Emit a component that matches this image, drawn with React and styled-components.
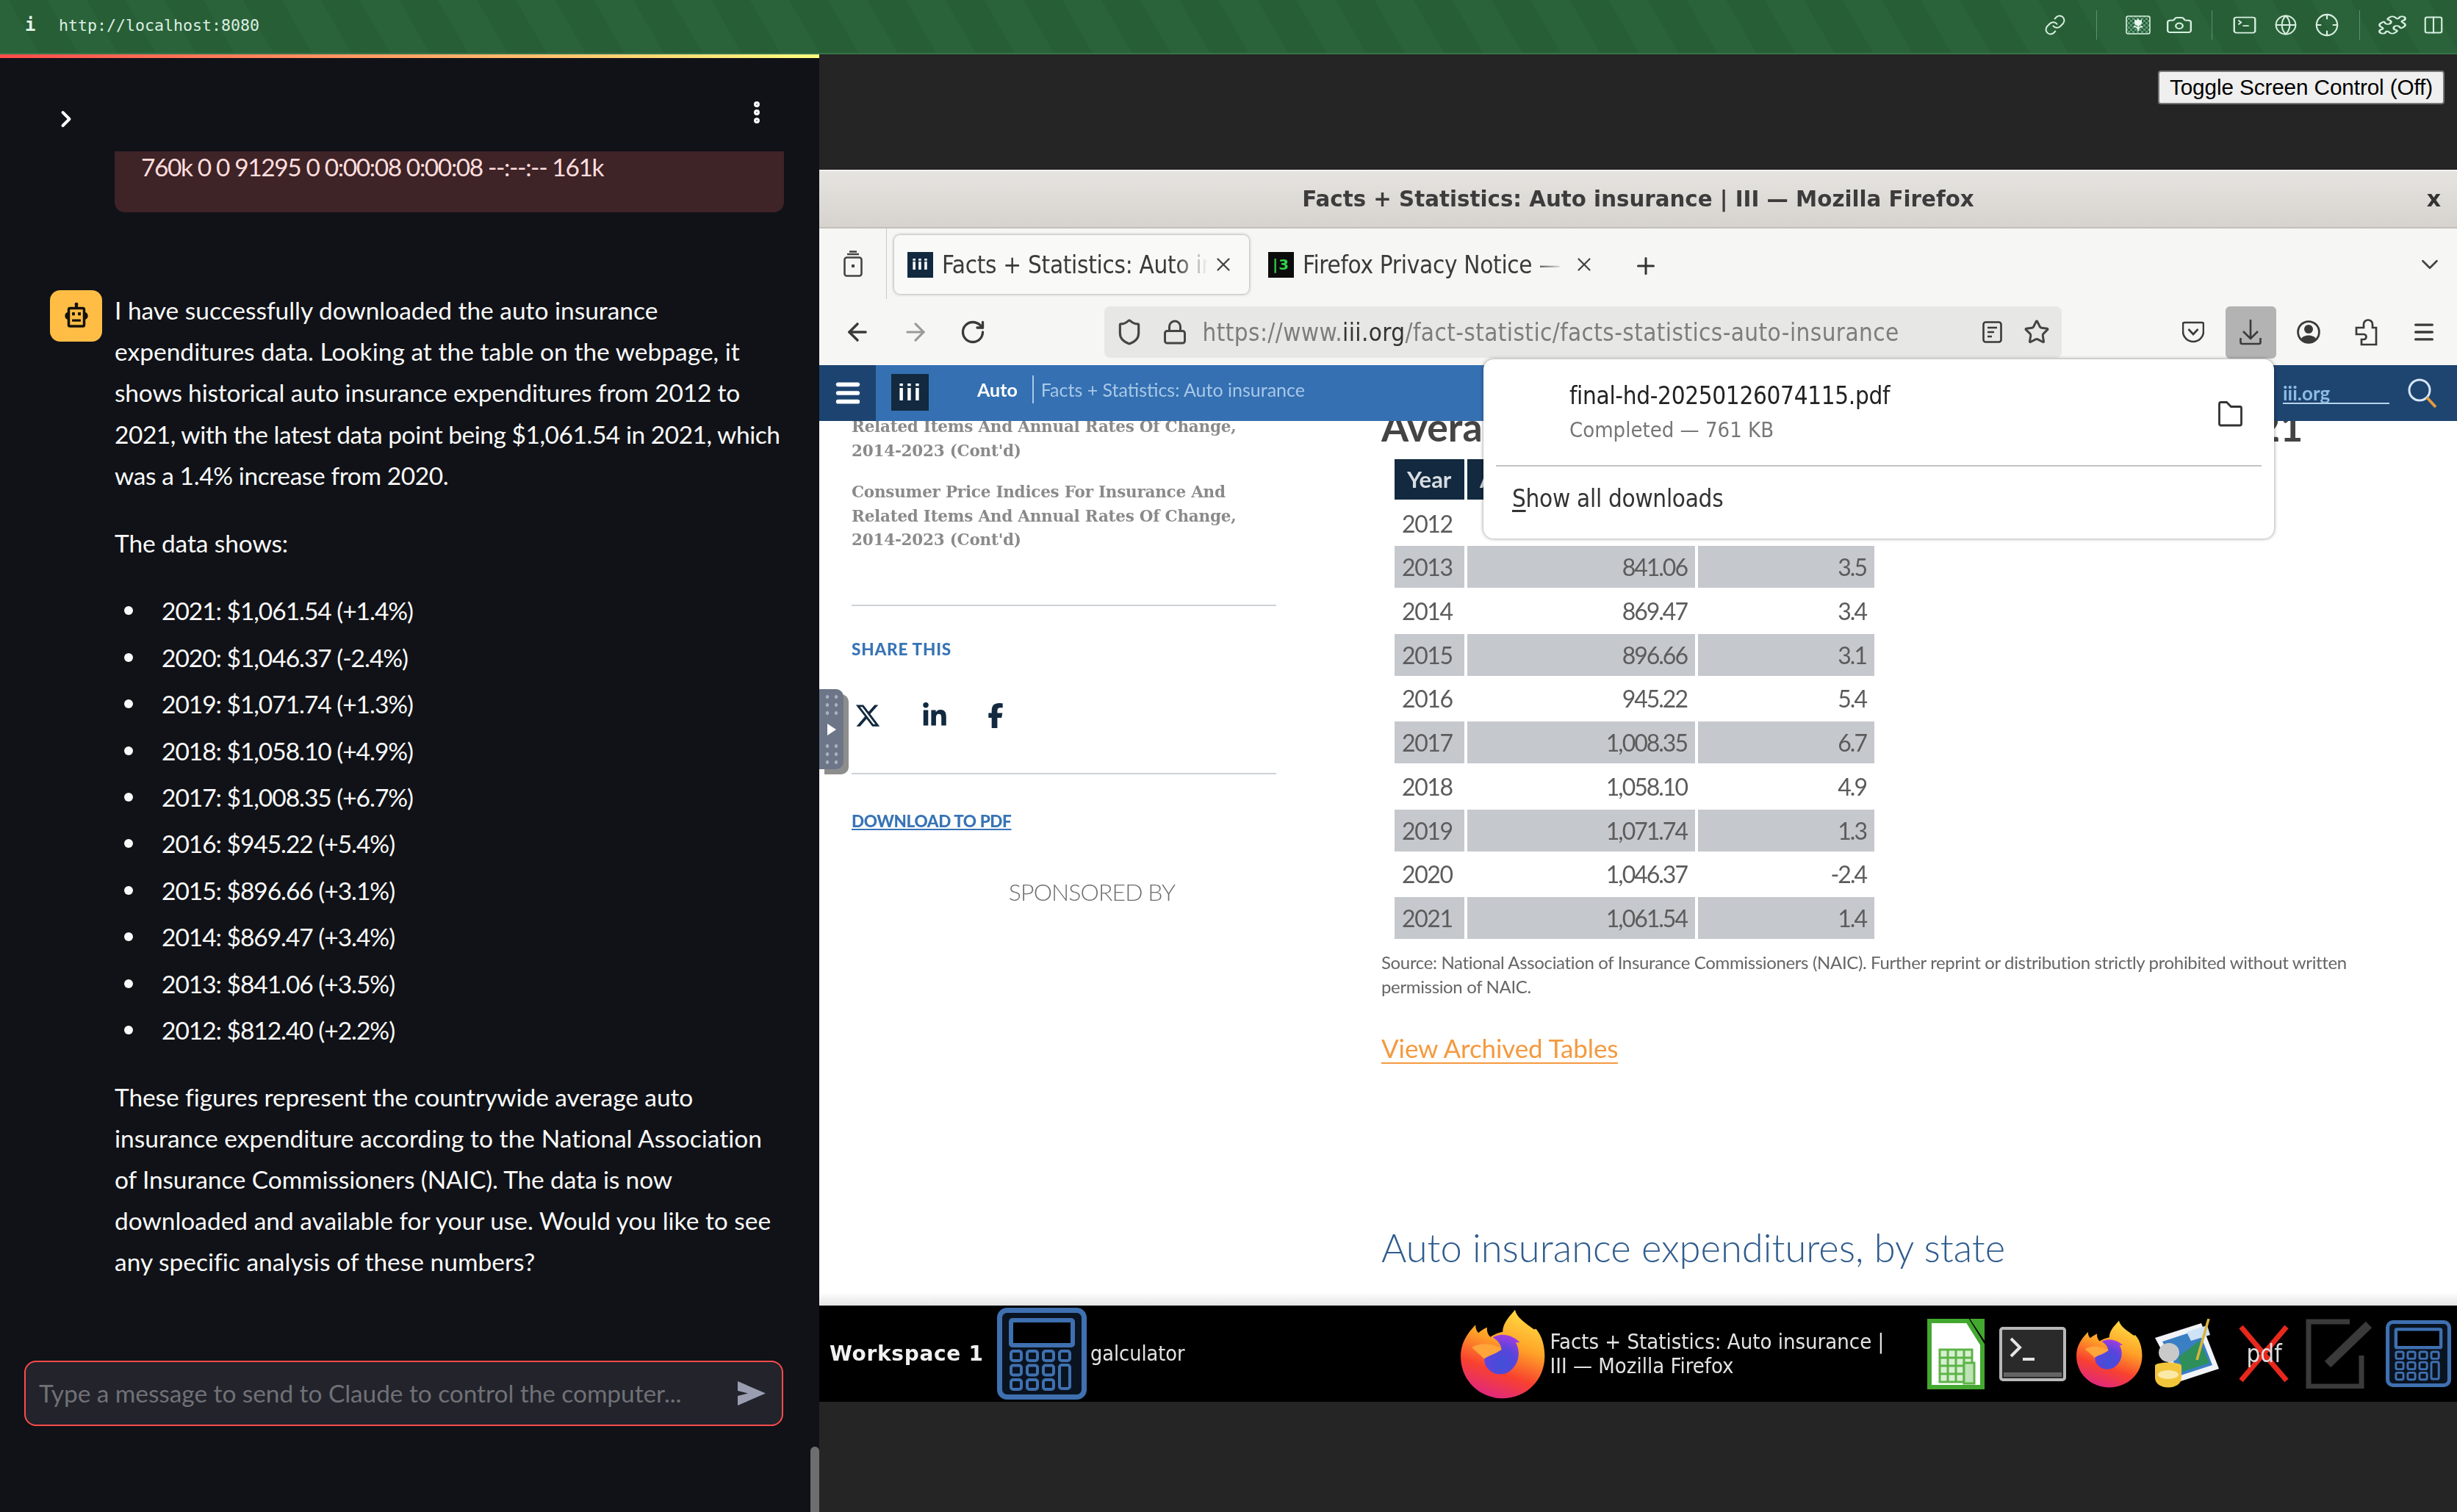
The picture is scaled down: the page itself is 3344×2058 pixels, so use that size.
import React from "react";
import styled, { createGlobalStyle } from "styled-components";
import { Link, Camera, SquareTerminal, Globe, Crosshair, Puzzle, Columns2, ChevronRight, EllipsisVertical, ArrowLeft, ArrowRight, RotateCw, Shield, Lock, Star, Menu, ChevronDown, Plus, X } from "lucide-react";
import { FaXTwitter, FaLinkedinIn, FaFacebookF } from "react-icons/fa6";

const Global = createGlobalStyle`
  html, body { margin: 0; padding: 0; background: #252525; }
  * { box-sizing: border-box; }
  #root { width: 3344px; height: 2058px; overflow: hidden; }
`;

const Root = styled.div`
  width: 3344px; height: 2058px; display: flex; flex-direction: column; background: #252525;
`;
const TopBar = styled.header`
  height: 74px; flex: none; display: flex; align-items: center; padding: 0 4px 4px 0;
  background: repeating-linear-gradient(60deg, #2a6339 0 46px, #275e36 46px 92px);
  border-bottom: 2px solid #37734a;
  color: #dcefe3;
`;
const InfoI = styled.span`
  font: 700 24px "DejaVu Sans Mono", monospace; margin-left: 34px; width: 46px; color: #e4f3ea;
`;
const Address = styled.span`
  font: 400 21.6px "DejaVu Sans Mono", monospace; flex: 1; color: #dcefe3;
`;
const BarSlot = styled.span`
  width: 56px; display: flex; justify-content: center; align-items: center; color: #d8efe1;
`;
const BarSep = styled.span`
  width: 1px; height: 40px; background: #5b9170; margin: 0 ${p => p.$gap}px;
`;
const Body = styled.div`
  flex: 1; display: flex; min-height: 0;
`;
const Left = styled.section`
  width: 1115px; flex: none; position: relative; display: flex; flex-direction: column;
  background: #101217; color: #fafafa;
  font-family: "Lato", "Noto Sans", sans-serif; font-size: 33.5px; line-height: 56.2px;
`;
const Decoration = styled.div`
  height: 5px; flex: none; background: linear-gradient(90deg, #ff4b4b, #fffd80);
`;
const Header = styled.div`
  height: 127px; flex: none; display: flex; justify-content: space-between; padding: 55px 66px 0 72px; color: #fff;
`;
const ChevronBox = styled.span`
  display: block; margin-top: 5px; height: 36px;
`;
const ErrorBox = styled.div`
  margin-left: 156px; width: 911px; height: 83px; flex: none; padding: 0 36px;
  background: #3e2327; color: #ffdede; border-radius: 0 0 14px 14px; line-height: 42px; letter-spacing: -1.41px;
`;
const Message = styled.div`
  margin: 106px 0 0 68px; display: flex; gap: 17px; align-items: flex-start;
`;
const Avatar = styled.div`
  width: 71px; height: 70px; flex: none; background: #ffbd45; border-radius: 14px; display: flex; align-items: center; justify-content: center;
`;
const Content = styled.div`
  white-space: nowrap; margin-top: -1px;
`;
const Para = styled.p`
  margin: 0 0 36px;
`;
const Line = styled.span`
  display: block; letter-spacing: ${p => p.$ls}px;
`;
const Bullets = styled.ul`
  margin: 0 0 34px; padding: 0 0 0 64px; list-style: none; letter-spacing: -1.03px;
`;
const BulletItem = styled.li`
  position: relative; margin-bottom: 7.25px;
  &:last-child { margin-bottom: 0; }
  &::before { content: ""; position: absolute; left: -51px; top: 22px; width: 12px; height: 12px; border-radius: 50%; background: #fafafa; }
`;
const InputWrap = styled.div`
  margin-top: auto; padding: 0 49px 117px 33px;
`;
const InputBox = styled.div`
  height: 89px; border: 2px solid #ff4b4b; border-radius: 16px; background: #22232b; display: flex; align-items: center; justify-content: space-between; padding: 0 22px 0 18px;
  color: #707176; letter-spacing: -0.08px;
`;
const Scrollbar = styled.div`
  position: absolute; right: 0; bottom: 0; width: 12px; height: 89px; background: #6c6e70; border-radius: 6px 6px 0 0;
`;

const Right = styled.section`
  flex: 1; display: flex; flex-direction: column; min-width: 0;
`;
const ControlRow = styled.div`
  height: 157px; flex: none; display: flex; justify-content: flex-end; padding: 22px 17px 0 0; align-items: flex-start;
`;
const ToggleButton = styled.button`
  width: 390px; height: 46px; padding: 0 0 1px; background: #efefef; border: 2px solid #767676; border-radius: 4px; color: #000;
  font: 400 29.7px "Liberation Sans", Arial, sans-serif; letter-spacing: -0.1px; line-height: 38px;
`;
const Win = styled.div`
  height: 1546px; flex: none; position: relative; display: flex; flex-direction: column; background: #f6f6f4; overflow: hidden; filter: blur(0.5px);
`;
const TitleBar = styled.div`
  height: 80px; flex: none; display: flex; align-items: center; justify-content: center; position: relative;
  background: linear-gradient(#e6e4e0, #d6d3ce); border-top: 2px solid #f2f1ef; border-bottom: 2px solid #c3c0b9;
  font: 700 29.3px "DejaVu Sans", sans-serif; color: #3c3c3c;
`;
const WinClose = styled.span`
  position: absolute; right: 22px; top: 20px; font: 700 30px "DejaVu Sans", sans-serif; color: #333;
`;
const TabRow = styled.div`
  height: 101px; flex: none; display: flex; align-items: flex-start; position: relative; color: #3a3a3a;
`;
const ViewSlot = styled.div`
  width: 92px; height: 96px; flex: none; display: flex; align-items: center; justify-content: center; border-right: 1px solid #c9c9c7; margin-right: 10px;
`;
const TabBox = styled.div`
  width: ${p => p.$w}px; height: 80px; margin-top: 9px; flex: none; display: flex; align-items: center; padding-left: ${p => p.$active ? 18 : 26}px;
  border-radius: 8px; background: ${p => p.$active ? "#f9f9f8" : "transparent"};
  box-shadow: ${p => p.$active ? "0 0 4px rgba(0,0,0,.4)" : "none"};
`;
const TabText = styled.span`
  font: 400 33px "DejaVu Sans", sans-serif; font-stretch: condensed; white-space: nowrap; overflow: hidden; flex: none; width: ${p => p.$w}px; margin-left: 12px; letter-spacing: -0.3px;
  -webkit-mask-image: linear-gradient(90deg, #000 88%, transparent 100%); mask-image: linear-gradient(90deg, #000 88%, transparent 100%);
`;
const TabClose = styled.span`
  display: flex; width: 40px; justify-content: center; margin-left: ${p => p.$ml}px; color: #444;
`;
const Favicon = styled.span`
  width: 35px; height: 35px; flex: none; background: ${p => p.$bg}; display: flex; align-items: center; justify-content: center;
  font: 700 20px "DejaVu Sans", sans-serif; color: ${p => p.$fg}; letter-spacing: 1px;
`;
const PlusSlot = styled.span`
  width: 60px; margin: 33px 0 0 20px; display: flex; justify-content: center; color: #333;
`;
const TabChevron = styled.span`
  position: absolute; right: 18px; top: 30px; color: #444;
`;
const NavRow = styled.div`
  height: 85px; flex: none; display: flex; align-items: flex-start; padding: 5px 0 0 13px; color: #3a3a3a;
`;
const NavSlot = styled.span`
  width: 78.5px; height: 70px; flex: none; display: flex; align-items: center; justify-content: center; color: ${p => p.$c || "#3a3a3a"};
`;
const UrlBar = styled.div`
  width: 1303px; height: 70px; margin: 0 140px 0 139px; flex: none; display: flex; align-items: center; background: #e7e7e6; border-radius: 8px; padding: 0 14px;
`;
const UrlIcon = styled.span`
  width: 40px; display: flex; justify-content: center; margin-left: ${p => p.$ml || 0}px; color: #454545;
`;
const UrlText = styled.span`
  flex: 1; margin-left: 18px; font: 400 33px "DejaVu Sans", sans-serif; font-stretch: condensed; color: #7d7d7d; white-space: nowrap; letter-spacing: 0.4px;
  b { font-weight: 400; color: #333; }
`;
const DownloadBtn = styled.span`
  width: 69px; height: 71px; background: #b3b3b3; border-radius: 6px; display: flex; align-items: center; justify-content: center; color: #3a3a3a;
`;
const Page = styled.div`
  flex: 1; min-height: 0; display: flex; flex-direction: column; background: #fff; position: relative; overflow: hidden;
  &::after { content: ""; position: absolute; left: 0; right: 0; bottom: 0; height: 18px; background: linear-gradient(rgba(255,255,255,0), #e4e4e4); }
`;
const SiteBar = styled.div`
  height: 76px; flex: none; display: flex; align-items: center; background: linear-gradient(90deg, #3470b2 0 86%, #1e4470 86%); position: relative; z-index: 1;
`;
const Burger = styled.span`
  width: 77px; height: 100%; background: #1d4471; display: flex; align-items: center; justify-content: center; color: #fff;
`;
const SiteLogo = styled.span`
  width: 51px; height: 50px; margin: -2px 0 0 21px; background: #12293f; color: #fff; display: flex; align-items: center; justify-content: center;
  font: 700 32px "Liberation Sans", sans-serif; letter-spacing: 2px;
`;
const Crumb = styled.span`
  margin: -10px 0 0 66px; font: 700 25px "Lato", sans-serif; color: #fff; padding-right: 20px; border-right: 2px solid #a8c8e8; line-height: 38px;
`;
const CrumbTail = styled.span`
  margin: -10px 0 0 10px; font: 400 25px "Lato", sans-serif; color: #a9c8e8; letter-spacing: 0;
`;
const SiteSearch = styled.span`
  margin-left: auto; display: flex; align-items: center; width: 249px; padding-left: 12px;
`;
const SiteDomain = styled.span`
  width: 145px; border-bottom: 2px solid #b8d4ee; font: 700 26px "Lato", sans-serif; color: #8dbbe2; line-height: 26px; margin: 2px 0 0;
`;
const MagSlot = styled.span`
  margin-left: 24px; display: flex;
`;
const Columns = styled.div`
  flex: 1; display: flex; min-height: 0;
`;
const Sidebar = styled.aside`
  width: 765px; flex: none; padding-left: 44px; margin-top: -8px;
`;
const SideLink = styled.p`
  margin: 0 0 24px; width: 600px; font: 700 21.5px/32.5px "DejaVu Serif", serif; color: #8a8a8a; letter-spacing: -0.24px; white-space: nowrap;
`;
const Rule = styled.div`
  width: 578px; height: 2px; background: #cdd2d9; margin-top: ${p => p.$mt}px;
`;
const SideLabel = styled.div`
  margin-top: ${p => p.$mt}px; font: 900 22.5px/30px "Lato", sans-serif; letter-spacing: ${p => p.$ls}px; color: #3874b6;
  span { text-decoration: ${p => p.$u ? "underline" : "none"}; }
`;
const Social = styled.div`
  margin-top: 55px; display: flex; align-items: center; height: 40px; color: #12293f; padding-left: 4px;
  svg:nth-child(2) { margin-left: 55px; }
  svg:nth-child(3) { margin-left: 48px; }
`;
const Sponsored = styled.div`
  margin-top: 61px; width: 654px; text-align: center; font: 300 32px/40px "Lato", sans-serif; color: #6d6d6d; letter-spacing: -0.9px;
`;
const Handle = styled.div`
  position: absolute; left: 0; top: 441px; height: 109px; width: 33px; background: #6c7688; border-radius: 0 10px 10px 0; box-shadow: 7px 7px 0 #8d8d8d; z-index: 3;
  display: flex; flex-direction: column; align-items: center; justify-content: center; gap: 8px;
`;
const Dots = styled.span`
  width: 24px; height: 33px; display: block;
  background-image: radial-gradient(circle, #a9b0bc 2.2px, transparent 2.6px); background-size: 12px 11px;
`;
const Main = styled.main`
  flex: 1; min-width: 0; overflow: hidden; color: #555;
`;
const Heading = styled.h2`
  margin: -23px 0 0; font: 700 53.5px/60px "Lato", sans-serif; color: #444; white-space: nowrap;
`;
const TableGrid = styled.div`
  margin: 15px 0 0 18px; width: 654px; display: grid; grid-template-columns: 95px 310px 240px; column-gap: 4px; row-gap: 2.7px;
`;
const HeadCell = styled.div`
  height: 55px; margin-bottom: 1px; background: #12293f; color: #d8dde2; font: 700 31px/55px "Lato", sans-serif; padding-left: 17px; white-space: nowrap; overflow: hidden;
`;
const Cell = styled.div`
  height: 57px; background: ${p => p.$shade ? "#c5c8cd" : "#fff"}; font: 400 32px/57px "Lato", sans-serif; color: #5c5c5c; letter-spacing: ${p => p.$num ? -2 : -1.4}px;
  text-align: ${p => p.$num ? "right" : "left"}; padding: 0 ${p => p.$num ? 11 : 0}px 0 ${p => p.$num ? 0 : 10}px;
`;
const SourceNote = styled.p`
  margin: 15px 0 0; font: 400 24px/33px "Lato", sans-serif; color: #666; letter-spacing: -0.35px; white-space: nowrap;
`;
const Archived = styled.a`
  display: inline-block; margin-top: 47px; font: 400 35px/40px "Lato", sans-serif; color: #f49a3f; border-bottom: 2px solid #f49a3f; letter-spacing: -0.1px;
`;
const StateHeading = styled.h2`
  margin: 220px 0 0; font: 300 52.5px/60px "Lato", sans-serif; color: #2f5c8d;
`;
const Popup = styled.div`
  position: absolute; left: 904px; top: 258px; width: 1076px; height: 244px; background: #fff; border-radius: 14px; box-shadow: 0 0 5px rgba(0,0,0,.45); z-index: 4; color: #222;
  font-family: "DejaVu Sans", sans-serif; font-stretch: condensed;
`;
const PopItem = styled.div`
  height: 144px; display: flex; align-items: center; justify-content: space-between; padding: 4px 43px 0 117px;
`;
const PopName = styled.div`
  font-size: 33px; line-height: 44px; letter-spacing: -0.33px;
`;
const PopMeta = styled.div`
  font-size: 29px; line-height: 48px; color: #777;
`;
const PopRule = styled.div`
  height: 2px; margin: 0 17px; background: #c4c4c4;
`;
const PopFoot = styled.div`
  padding: 24px 0 0 39px; font-size: 33px; line-height: 40px; letter-spacing: -0.3px; color: #333;
  u { text-underline-offset: 4px; }
`;
const Taskbar = styled.div`
  height: 131px; flex: none; display: flex; align-items: center; background: #000; color: #eee; padding-left: 14px; filter: blur(0.5px);
`;
const Workspace = styled.span`
  font: 700 28px "DejaVu Sans", sans-serif; color: #f2f2f2; width: 228px; flex: none; letter-spacing: 0.7px; white-space: nowrap;
`;
const TaskLabel = styled.span`
  font: 400 ${p => p.$fs}px/33px "DejaVu Sans", sans-serif; font-stretch: condensed; color: #e4e4e4; white-space: nowrap; margin-left: ${p => p.$ml}px;
`;
const FfSlot = styled.span`
  margin-left: 375px; display: flex;
`;
const Tray = styled.div`
  margin-left: auto; display: flex; align-items: center; gap: 14px; padding-right: 8px;
  > :nth-child(2) { margin-left: 6px; }
  > :nth-child(5) { margin-left: 9px; }
  > :nth-child(6) { margin-left: 5px; }
`;
const PdfIcon = styled.span`
  width: 75px; height: 77px; display: flex; align-items: center; justify-content: center; position: relative; font: 400 33px "DejaVu Sans", sans-serif; font-stretch: condensed; color: #ddd;
  svg { position: absolute; inset: 0; }
  span { position: relative; }
`;

/* ---- drawings ---- */
const stretched = { preserveAspectRatio: "none" };
const TulipIcon = () => (
  <svg width="34" height="26" viewBox="0 0 34 26" fill="none">
    <defs>
      <pattern id="chk" width="6" height="6" patternUnits="userSpaceOnUse">
        <rect width="3" height="3" fill="#5f9a77" /><rect x="3" y="3" width="3" height="3" fill="#5f9a77" />
      </pattern>
    </defs>
    <rect x="1" y="1" width="32" height="24" rx="2.5" fill="url(#chk)" stroke="#d8efe1" strokeWidth="1.6" />
    <path d="M12 5l2.5 2L17 4.5 19.5 7 22 5v5a5 4 0 0 1-10 0z" fill="#eaf7ef" />
    <path d="M17 13v8M11 15c3 0 6 2 6 5M23 15c-3 0-6 2-6 5" stroke="#eaf7ef" strokeWidth="1.8" />
  </svg>
);
const RobotIcon = () => (
  <svg width="42" height="42" viewBox="0 0 24 24">
    <path fill="#15120c" d="M12 1.5a1.4 1.4 0 0 1 1.2 2.1V5H17a2 2 0 0 1 2 2v2.2a3 3 0 0 1 0 5.6V19a2 2 0 0 1-2 2H7a2 2 0 0 1-2-2v-4.2a3 3 0 0 1 0-5.6V7a2 2 0 0 1 2-2h3.8V3.6A1.4 1.4 0 0 1 12 1.5z" />
    <rect x="7" y="7" width="10" height="12" fill="#ffbd45" />
    <rect x="8.6" y="9.2" width="2.2" height="2.4" fill="#15120c" /><rect x="13.2" y="9.2" width="2.2" height="2.4" fill="#15120c" />
    <rect x="8.6" y="14.6" width="6.8" height="1.8" fill="#15120c" />
  </svg>
);
const SendIcon = () => (
  <svg width="39" height="33" viewBox="0 0 39 33"><path d="M1 0l38 16.5L1 33V20l14-3.5L1 13z" fill="#9a9eb0" /></svg>
);
const ViewIcon = () => (
  <svg width="26" height="36" viewBox="0 0 26 36" fill="none" stroke="#444" strokeWidth="2.6">
    <rect x="1.5" y="9.5" width="23" height="25" rx="3" /><path d="M5 5h16M8 1.5h10" /><rect x="11" y="19" width="4" height="4" fill="#444" stroke="none" />
  </svg>
);
const ReaderIcon = () => (
  <svg width="27" height="30" viewBox="0 0 27 30" fill="none" stroke="#3a3a3a" strokeWidth="2.6">
    <rect x="1.5" y="1.5" width="24" height="27" rx="3" /><path d="M7 9h13M7 15h9M7 21h6" />
  </svg>
);
const PocketIcon = () => (
  <svg width="30" height="30" viewBox="0 0 30 30" fill="none" stroke="#3a3a3a" strokeWidth="2.6">
    <path d="M3 2h24a2 2 0 0 1 2 2v10a14 14 0 0 1-28 0V4a2 2 0 0 1 2-2z" /><path d="M8.5 11l6.5 7 6.5-7" />
  </svg>
);
const DownloadIcon = () => (
  <svg width="30" height="36" viewBox="0 0 30 36" fill="none" stroke="#3a3a3a" strokeWidth="2.6">
    <path d="M15 1v25M5 17l10 10 10-10M1.5 26v6a2 2 0 0 0 2 2h23a2 2 0 0 0 2-2v-6" />
  </svg>
);
const AccountIcon = () => (
  <svg width="32" height="32" viewBox="0 0 32 32" fill="none">
    <circle cx="16" cy="16" r="14.4" stroke="#3a3a3a" strokeWidth="2.8" />
    <circle cx="16" cy="12" r="6" fill="#3a3a3a" /><path d="M6 25c3-6 17-6 20 0a13 13 0 0 1-20 0z" fill="#3a3a3a" />
  </svg>
);
const ExtensionIcon = () => (
  <svg width="31" height="37" viewBox="0 0 31 37" fill="none" stroke="#3a3a3a" strokeWidth="2.7">
    <path d="M12 12V7c0-3 3-5.5 6-5.5S24 4 24 7v5h5v23H9v-7h3a3.5 3.5 0 0 0 0-7H2v-9z" />
  </svg>
);
const FolderIcon = () => (
  <svg width="33" height="35" viewBox="0 0 33 35" fill="none" stroke="#333" strokeWidth="2.8">
    <path d="M1.5 31V3.5a2 2 0 0 1 2-2h8l6 6h12a2 2 0 0 1 2 2V31a2 2 0 0 1-2 2h-26a2 2 0 0 1-2-2z" />
  </svg>
);
const FfLogo = ({ w, h, id }) => (
  <svg width={w} height={h} viewBox="25 18 342 356" preserveAspectRatio="none">
    <defs>
      <linearGradient id={id + "a"} x1="0.75" y1="0" x2="0.4" y2="1">
        <stop offset="0" stopColor="#ffdf45" /><stop offset="0.4" stopColor="#ffa227" /><stop offset="0.72" stopColor="#f8412f" /><stop offset="1" stopColor="#e0287c" />
      </linearGradient>
      <radialGradient id={id + "b"} cx="0.5" cy="0.75" r="0.75">
        <stop offset="0" stopColor="#3f50d6" /><stop offset="0.55" stopColor="#5a44dc" /><stop offset="1" stopColor="#a13ddf" />
      </radialGradient>
    </defs>
    <path fill={`url(#${id}a)`} d="M195 372C100 372 25 300 25 205C25 160 45 120 85 80C85 95 90 105 97 112C105 105 118 95 132 90C130 105 135 118 145 128C160 118 178 112 195 108C195 70 225 45 245 20C250 50 290 75 322 98L330 96C355 125 365 165 365 205C365 300 290 372 195 372Z" />
    <path fill={`url(#${id}b)`} d="M155 130C185 110 235 118 265 150L248 150C268 185 265 240 215 270C170 290 120 260 120 215C130 190 170 190 190 180C190 160 175 140 155 130Z" />
    <path fill="#ffa53a" d="M70 170C100 150 150 150 190 175C175 195 140 200 120 215C105 200 85 185 70 170Z" />
  </svg>
);
const CalcIcon = ({ w, h }) => (
  <svg width={w} height={h} viewBox="0 0 122 125" preserveAspectRatio="none" fill="none" stroke="#3f70b0">
    <rect x="3.5" y="3.5" width="115" height="118" rx="10" strokeWidth="7" fill="#0a1320" />
    <rect x="19" y="17" width="84" height="34" rx="2" strokeWidth="6" fill="#000" />
    {[0, 1, 2].map(r => [0, 1, 2, 3].map(c => (
      (r === 0 || c < 3) ? <rect key={`${r}${c}`} x={19 + c * 22} y={59 + r * 19.5} width="14" height="13" rx="3" strokeWidth="4" /> : null
    )))}
    <rect x="85" y="78" width="14" height="32" rx="3" strokeWidth="4" />
  </svg>
);
const SheetIcon = () => (
  <svg width="78" height="96" viewBox="0 0 78 96">
    <path d="M3 3h52l20 32v58H3z" fill="#fff" stroke="#43a82f" strokeWidth="6" />
    <path d="M58 0h20v30z" fill="#43a82f" />
    <g stroke="#5cb547" strokeWidth="3" fill="#d9efd2">
      <rect x="17" y="42" width="44" height="44" />
      <path d="M17 53h44M17 64h44M17 75h44M28 42v44M39 42v44M50 42v44" fill="none" />
      <rect x="50" y="60" width="14" height="28" fill="#bfe3b6" />
    </g>
  </svg>
);
const TermIcon = () => (
  <svg width="91" height="74" viewBox="0 0 91 74">
    <rect x="2" y="2" width="87" height="70" rx="3" fill="#2a2a2a" stroke="#b8b8b8" strokeWidth="4" />
    <rect x="6" y="62" width="79" height="6" fill="#8c8c8c" opacity=".6" />
    <path d="M16 16l12 12-12 12" fill="none" stroke="#e4e4e4" strokeWidth="4" />
    <path d="M32 44h16" stroke="#e4e4e4" strokeWidth="4" />
  </svg>
);
const PaintIcon = () => (
  <svg width="91" height="95" viewBox="0 0 91 95">
    <path d="M3 26L66 6l24 62-55 18z" fill="#f1f3f7" />
    <path d="M13 31L62 15l19 48-43 14z" fill="#3a7fc4" />
    <path d="M35 52l28-22 14 30-36 12z" fill="#2f8f5a" />
    <path d="M46 18L74 9 78 22 52 30z" fill="#cfe3f6" />
    <path d="M60 56L76 0" stroke="#d8b53c" strokeWidth="3.5" />
    <ellipse cx="22" cy="46" rx="14" ry="13" fill="#c9c9c9" />
    <path d="M3 64c0-6 36-6 36 0v16c0 18-36 18-36 0z" fill="#f3c53a" />
    <ellipse cx="21" cy="76" rx="14" ry="6" fill="#fbe9a8" />
  </svg>
);
const EditIcon = () => (
  <svg width="95" height="95" viewBox="0 0 95 95" fill="none" stroke="#3a3a3a">
    <path d="M60 4H4v88h72V50" strokeWidth="7" />
    <path d="M30 62L86 8" strokeWidth="12" />
  </svg>
);
const SiteMag = () => (
  <svg width="42" height="42" viewBox="0 0 42 42" fill="none">
    <circle cx="17" cy="17" r="14" stroke="#d5e6f5" strokeWidth="3" /><path d="M27 27l12 13" stroke="#e59a3c" strokeWidth="4" />
  </svg>
);

const rows = [
  ["2012", "812.40", "2.2"], ["2013", "841.06", "3.5"], ["2014", "869.47", "3.4"], ["2015", "896.66", "3.1"], ["2016", "945.22", "5.4"],
  ["2017", "1,008.35", "6.7"], ["2018", "1,058.10", "4.9"], ["2019", "1,071.74", "1.3"], ["2020", "1,046.37", "-2.4"], ["2021", "1,061.54", "1.4"],
];
const bullets = ["2021: $1,061.54 (+1.4%)", "2020: $1,046.37 (-2.4%)", "2019: $1,071.74 (+1.3%)", "2018: $1,058.10 (+4.9%)", "2017: $1,008.35 (+6.7%)", "2016: $945.22 (+5.4%)", "2015: $896.66 (+3.1%)", "2014: $869.47 (+3.4%)", "2013: $841.06 (+3.5%)", "2012: $812.40 (+2.2%)"];
const intro = [
  ["I have successfully downloaded the auto insurance", -0.03],
  ["expenditures data. Looking at the table on the webpage, it", 0.01],
  ["shows historical auto insurance expenditures from 2012 to", -0.18],
  ["2021, with the latest data point being $1,061.54 in 2021, which", -0.48],
  ["was a 1.4% increase from 2020.", -0.41],
];
const closing = [
  ["These figures represent the countrywide average auto", -0.09],
  ["insurance expenditure according to the National Association", 0.01],
  ["of Insurance Commissioners (NAIC). The data is now", -0.13],
  ["downloaded and available for your use. Would you like to see", -0.02],
  ["any specific analysis of these numbers?", 0.01],
];

export default function App() {
  return (
    <Root>
      <Global />
      <TopBar>
        <InfoI>i</InfoI>
        <Address>http://localhost:8080</Address>
        <BarSlot><Link width={30} height={30} strokeWidth={1.6} {...stretched} /></BarSlot>
        <BarSep $gap={28} />
        <BarSlot><TulipIcon /></BarSlot>
        <BarSlot><Camera width={38} height={30} strokeWidth={1.5} {...stretched} /></BarSlot>
        <BarSep $gap={16} />
        <BarSlot><SquareTerminal width={38} height={28} strokeWidth={1.5} {...stretched} /></BarSlot>
        <BarSlot><Globe width={32} height={30} strokeWidth={1.5} {...stretched} /></BarSlot>
        <BarSlot><Crosshair width={34} height={34} strokeWidth={1.5} {...stretched} /></BarSlot>
        <BarSep $gap={16} />
        <BarSlot><Puzzle width={42} height={28} strokeWidth={1.6} {...stretched} /></BarSlot>
        <BarSlot><Columns2 width={30} height={28} strokeWidth={1.7} {...stretched} /></BarSlot>
      </TopBar>
      <Body>
        <Left>
          <Decoration />
          <Header>
            <ChevronBox><ChevronRight size={36} strokeWidth={2.6} /></ChevronBox>
            <EllipsisVertical size={38} strokeWidth={3} />
          </Header>
          <ErrorBox>760k 0 0 91295 0 0:00:08 0:00:08 --:--:-- 161k</ErrorBox>
          <Message>
            <Avatar><RobotIcon /></Avatar>
            <Content>
              <Para>{intro.map(([t, ls]) => <Line key={t} $ls={ls}>{t}</Line>)}</Para>
              <Para><Line $ls={-0.12}>The data shows:</Line></Para>
              <Bullets>{bullets.map(b => <BulletItem key={b}>{b}</BulletItem>)}</Bullets>
              <Para>{closing.map(([t, ls]) => <Line key={t} $ls={ls}>{t}</Line>)}</Para>
            </Content>
          </Message>
          <InputWrap>
            <InputBox>
              <span>Type a message to send to Claude to control the computer...</span>
              <SendIcon />
            </InputBox>
          </InputWrap>
          <Scrollbar />
        </Left>
        <Right>
          <ControlRow><ToggleButton>Toggle Screen Control (Off)</ToggleButton></ControlRow>
          <Win>
            <TitleBar>Facts + Statistics: Auto insurance | III — Mozilla Firefox<WinClose>x</WinClose></TitleBar>
            <TabRow>
              <ViewSlot><ViewIcon /></ViewSlot>
              <TabBox $active $w={483}>
                <Favicon $bg="#12293f" $fg="#fff">iii</Favicon>
                <TabText $w={362}>Facts + Statistics: Auto insurance</TabText>
                <TabClose $ml={1}><X size={30} strokeWidth={1.8} /></TabClose>
              </TabBox>
              <TabBox $w={490}>
                <Favicon $bg="#0c0c0c" $fg="#33d04a">|3</Favicon>
                <TabText $w={356}>Firefox Privacy Notice — Mozilla</TabText>
                <TabClose $ml={7}><X size={30} strokeWidth={1.8} /></TabClose>
              </TabBox>
              <PlusSlot><Plus size={36} strokeWidth={2} /></PlusSlot>
              <TabChevron><ChevronDown size={38} strokeWidth={1.7} /></TabChevron>
            </TabRow>
            <NavRow>
              <NavSlot><ArrowLeft size={38} strokeWidth={2.2} /></NavSlot>
              <NavSlot $c="#9a9a9a"><ArrowRight size={38} strokeWidth={2} /></NavSlot>
              <NavSlot><RotateCw size={36} strokeWidth={2.2} /></NavSlot>
              <UrlBar>
                <UrlIcon><Shield size={38} strokeWidth={2} /></UrlIcon>
                <UrlIcon $ml={22}><Lock size={36} strokeWidth={2} /></UrlIcon>
                <UrlText>https://www.<b>iii.org</b>/fact-statistic/facts-statistics-auto-insurance</UrlText>
                <UrlIcon><ReaderIcon /></UrlIcon>
                <UrlIcon $ml={20}><Star size={36} strokeWidth={2} /></UrlIcon>
              </UrlBar>
              <NavSlot><PocketIcon /></NavSlot>
              <NavSlot><DownloadBtn><DownloadIcon /></DownloadBtn></NavSlot>
              <NavSlot><AccountIcon /></NavSlot>
              <NavSlot><ExtensionIcon /></NavSlot>
              <NavSlot><Menu size={34} strokeWidth={2.4} /></NavSlot>
            </NavRow>
            <Page>
              <SiteBar>
                <Burger><Menu size={40} strokeWidth={3.4} /></Burger>
                <SiteLogo>iii</SiteLogo>
                <Crumb>Auto</Crumb>
                <CrumbTail>Facts + Statistics: Auto insurance</CrumbTail>
                <SiteSearch>
                  <SiteDomain>iii.org</SiteDomain>
                  <MagSlot><SiteMag /></MagSlot>
                </SiteSearch>
              </SiteBar>
              <Columns>
                <Sidebar>
                  <SideLink>Related Items And Annual Rates Of Change,<br />2014-2023 (Cont'd)</SideLink>
                  <SideLink>Consumer Price Indices For Insurance And<br />Related Items And Annual Rates Of Change,<br />2014-2023 (Cont'd)</SideLink>
                  <Rule $mt={71} />
                  <SideLabel $mt={44} $ls={0.8}><span>SHARE THIS</span></SideLabel>
                  <Social>
                    <FaXTwitter size={36} />
                    <FaLinkedinIn size={36} />
                    <FaFacebookF size={34} />
                  </Social>
                  <Rule $mt={58} />
                  <SideLabel $mt={49} $u $ls={-0.4}><span>DOWNLOAD TO PDF</span></SideLabel>
                  <Sponsored>SPONSORED BY</Sponsored>
                </Sidebar>
                <Main>
                  <Heading>Average expenditures for auto insurance, 2012-2021</Heading>
                  <TableGrid>
                    <HeadCell>Year</HeadCell>
                    <HeadCell>Average expenditure</HeadCell>
                    <HeadCell>Percent change</HeadCell>
                    {rows.map((r, i) => (
                      <React.Fragment key={r[0]}>
                        <Cell $shade={i % 2 === 1}>{r[0]}</Cell>
                        <Cell $shade={i % 2 === 1} $num>{r[1]}</Cell>
                        <Cell $shade={i % 2 === 1} $num>{r[2]}</Cell>
                      </React.Fragment>
                    ))}
                  </TableGrid>
                  <SourceNote>Source: National Association of Insurance Commissioners (NAIC). Further reprint or distribution strictly prohibited without written<br />permission of NAIC.</SourceNote>
                  <Archived>View Archived Tables</Archived>
                  <StateHeading>Auto insurance expenditures, by state</StateHeading>
                </Main>
              </Columns>
              <Handle>
                <Dots />
                <svg width="14" height="18" viewBox="0 0 14 18"><path d="M1 1l12 8-12 8z" fill="#fff" /></svg>
                <Dots />
              </Handle>
            </Page>
            <Popup>
              <PopItem>
                <div>
                  <PopName>final-hd-20250126074115.pdf</PopName>
                  <PopMeta>Completed — 761 KB</PopMeta>
                </div>
                <FolderIcon />
              </PopItem>
              <PopRule />
              <PopFoot><u>S</u>how all downloads</PopFoot>
            </Popup>
          </Win>
          <Taskbar>
            <Workspace>Workspace 1</Workspace>
            <CalcIcon w={122} h={125} />
            <TaskLabel $ml={5} $fs={28.5}>galculator</TaskLabel>
            <FfSlot><FfLogo w={115} h={122} id="f1" /></FfSlot>
            <TaskLabel $ml={7} $fs={29}>Facts + Statistics: Auto insurance |<br />III — Mozilla Firefox</TaskLabel>
            <Tray>
              <SheetIcon />
              <TermIcon />
              <FfLogo w={90} h={92} id="f2" />
              <PaintIcon />
              <PdfIcon><svg width="75" height="77" viewBox="0 0 75 77"><path d="M6 2l62 73M68 2L6 75" stroke="#e8281c" strokeWidth="7" /></svg><span>pdf</span></PdfIcon>
              <EditIcon />
              <CalcIcon w={89} h={91} />
            </Tray>
          </Taskbar>
        </Right>
      </Body>
    </Root>
  );
}
